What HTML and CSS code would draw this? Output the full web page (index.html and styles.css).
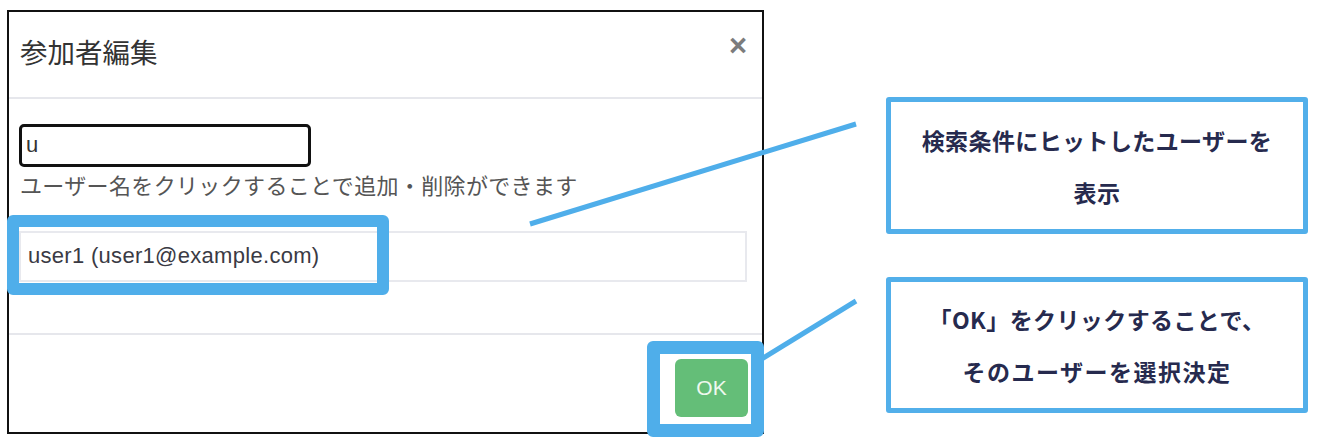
FILE: index.html
```html
<!DOCTYPE html>
<html lang="ja">
<head>
<meta charset="utf-8">
<title>参加者編集</title>
<link rel="stylesheet" href="styles.css">
</head>
<body>
<div class="canvas">
  <div class="modal">
    <div class="modal-header">
      <h4 class="modal-title">参加者編集</h4>
      <span class="close">&times;</span>
    </div>
    <div class="modal-body">
      <div class="search">u</div>
      <p class="help">ユーザー名をクリックすることで追加・削除ができます</p>
      <div class="list-item">user1 (user1@example.com)</div>
    </div>
    <div class="modal-footer">
      <button class="btn-ok">OK</button>
    </div>
  </div>

  <div class="hl hl-item"></div>
  <div class="hl hl-ok"></div>

  <svg class="lines" width="1342" height="437" viewBox="0 0 1342 437">
    <line x1="530" y1="224" x2="856" y2="124" stroke="#4faeea" stroke-width="5"/>
    <line x1="760" y1="360" x2="856" y2="301" stroke="#4faeea" stroke-width="5"/>
  </svg>

  <div class="note note-1">
    <p>検索条件にヒットしたユーザーを</p>
    <p>表示</p>
  </div>
  <div class="note note-2">
    <p>「OK」をクリックすることで、</p>
    <p class="wide">そのユーザーを選択決定</p>
  </div>
</div>
</body>
</html>
```

FILE: styles.css
```css
html, body {
  margin: 0;
  padding: 0;
  background: #ffffff;
}

.canvas {
  position: relative;
  width: 1342px;
  height: 437px;
  overflow: hidden;
  font-family: "Liberation Sans", "Noto Sans CJK JP", sans-serif;
}

.modal {
  box-sizing: border-box;
  margin: 10px 0 0 7px;
  width: 757px;
  height: 424px;
  border: 2px solid #111111;
  background: #ffffff;
  display: flex;
  flex-direction: column;
}

.modal-header {
  box-sizing: border-box;
  height: 87px;
  border-bottom: 2px solid #e6e7ec;
  display: flex;
  align-items: center;
  justify-content: space-between;
  padding: 0 15px 8px 11px;
}

.modal-title {
  margin: 0;
  font-size: 27.5px;
  font-weight: 400;
  color: #333333;
  line-height: 1;
  padding-top: 6px;
}

.close {
  font-family: "Liberation Sans", sans-serif;
  font-size: 31px;
  font-weight: 700;
  color: #7c7c7c;
  line-height: 1;
  margin-top: -10px;
}

.modal-body {
  box-sizing: border-box;
  height: 236px;
  border-bottom: 2px solid #e6e7ec;
  padding: 25px 14px 0 10px;
}

.search {
  box-sizing: border-box;
  width: 292px;
  height: 43px;
  border: 3px solid #111111;
  border-radius: 5px;
  padding: 0 4px;
  font-size: 22px;
  line-height: 36px;
  color: #333333;
}

.help {
  margin: 6px 0 0 1px;
  font-size: 22px;
  letter-spacing: 0.35px;
  line-height: 28px;
  color: #555555;
  white-space: nowrap;
}

.list-item {
  box-sizing: border-box;
  margin-top: 30px;
  width: 728px;
  height: 51px;
  border: 2px solid #e8e9ee;
  padding: 0 7px;
  font-size: 22px;
  letter-spacing: 0.3px;
  line-height: 46px;
  color: #3a3a44;
}

.modal-footer {
  flex: 1;
  display: flex;
  justify-content: flex-end;
  align-items: flex-start;
  padding: 24px 14px 0 0;
}

.btn-ok {
  width: 73px;
  height: 58px;
  border: none;
  border-radius: 6px;
  background: #64be78;
  color: #eef8ee;
  font-family: "Liberation Sans", sans-serif;
  font-size: 21px;
  padding: 0;
}

.hl {
  position: absolute;
  box-sizing: border-box;
  border: 12px solid #4faeea;
  border-radius: 6px;
}

.hl-item {
  left: 7px;
  top: 215px;
  width: 382px;
  height: 80px;
}

.hl-ok {
  left: 647px;
  top: 341px;
  width: 117px;
  height: 96px;
  border-width: 13px;
}

.lines {
  position: absolute;
  left: 0;
  top: 0;
  pointer-events: none;
}

.note {
  position: absolute;
  box-sizing: border-box;
  left: 886px;
  width: 422px;
  border: 5px solid #52afea;
  border-radius: 3px;
  display: flex;
  flex-direction: column;
  justify-content: center;
  align-items: center;
  font-family: "Noto Sans CJK JP", sans-serif;
  font-weight: 700;
  font-size: 23px;
  color: #262a4e;
}

.note p {
  margin: 0;
  line-height: 52px;
  white-space: nowrap;
  letter-spacing: 0.4px;
}

.note p.wide {
  letter-spacing: 1.5px;
}

.note-1 {
  top: 97px;
  height: 137px;
}

.note-2 {
  top: 277px;
  height: 136px;
}
```
